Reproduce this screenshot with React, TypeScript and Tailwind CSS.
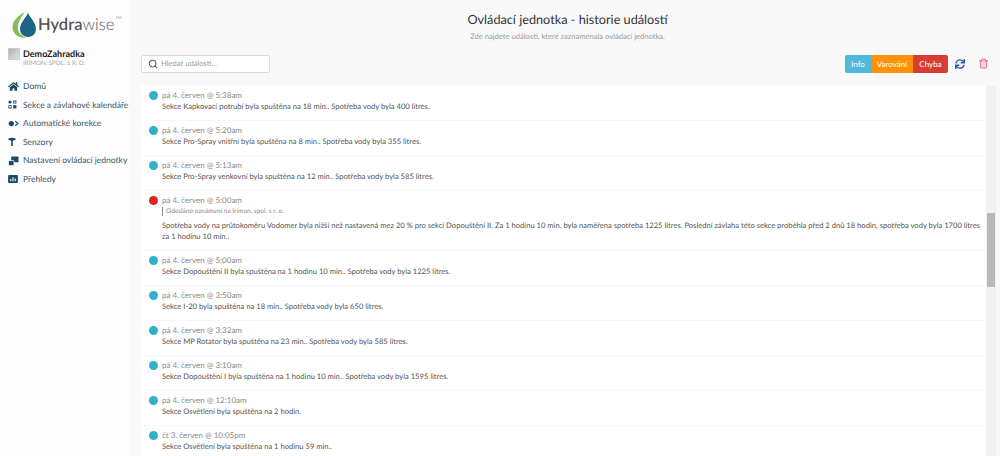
import { Search, Trash2 } from 'lucide-react'
import { FaHome, FaSync } from 'react-icons/fa'

interface EventRow {
  time: string
  text: string
  color?: 'blue' | 'red'
  note?: string
}

const events: EventRow[] = [
  { time: 'pá 4. červen @ 5:38am', text: 'Sekce Kapkovací potrubí byla spuštěna na 18 min.. Spotřeba vody byla 400 litres.' },
  { time: 'pá 4. červen @ 5:20am', text: 'Sekce Pro-Spray vnitřní byla spuštěna na 8 min.. Spotřeba vody byla 355 litres.' },
  { time: 'pá 4. červen @ 5:13am', text: 'Sekce Pro-Spray venkovní byla spuštěna na 12 min.. Spotřeba vody byla 585 litres.' },
  {
    time: 'pá 4. červen @ 5:00am',
    color: 'red',
    note: 'Odesláno oznámení na Irimon, spol. s r. o.',
    text: 'Spotřeba vody na průtokoměru Vodomer byla nižší než nastavená mez 20 % pro sekci Dopouštění II. Za 1 hodinu 10 min. byla naměřena spotřeba 1225 litres. Poslední závlaha této sekce proběhla před 2 dnů 18 hodin, spotřeba vody byla 1700 litres za 1 hodinu 10 min..',
  },
  { time: 'pá 4. červen @ 5:00am', text: 'Sekce Dopouštění II byla spuštěna na 1 hodinu 10 min.. Spotřeba vody byla 1225 litres.' },
  { time: 'pá 4. červen @ 3:50am', text: 'Sekce I-20 byla spuštěna na 18 min.. Spotřeba vody byla 650 litres.' },
  { time: 'pá 4. červen @ 3:32am', text: 'Sekce MP Rotator byla spuštěna na 23 min.. Spotřeba vody byla 585 litres.' },
  { time: 'pá 4. červen @ 3:10am', text: 'Sekce Dopouštění I byla spuštěna na 1 hodinu 10 min.. Spotřeba vody byla 1595 litres.' },
  { time: 'pá 4. červen @ 12:10am', text: 'Sekce Osvětlení byla spuštěna na 2 hodin.' },
  { time: 'čt 3. červen @ 10:05pm', text: 'Sekce Osvětlení byla spuštěna na 1 hodinu 59 min..' },
]

function ZonesIcon() {
  return (
    <svg width="9" height="9" viewBox="0 0 9 9" fill="#1d4a63">
      <circle cx="2" cy="2" r="1.6" />
      <path d="M5.2 0.6 H8.4 V3.6 H5.2 Z M6 1.4 V2.8 H7.6 V1.4 Z" fillRule="evenodd" />
      <path d="M0.4 5.2 H3.6 V8.4 H0.4 Z M1.2 6 V7.6 H2.8 V6 Z" fillRule="evenodd" />
      <path d="M5.2 5.2 H8.4 V8.4 H5.2 Z" />
    </svg>
  )
}

function AutoIcon() {
  return (
    <svg width="11" height="7" viewBox="0 0 12 8" fill="#1d4a63">
      <circle cx="3.5" cy="4" r="3" />
      <path d="M8 1.5 L11 4 L8 6.5" fill="none" stroke="#1d4a63" strokeWidth="1.4" />
    </svg>
  )
}

function SensorIcon() {
  return (
    <svg width="8" height="10" viewBox="0 0 10 11" fill="#1d4a63">
      <path d="M0.5 1 C3 -0.2 7 -0.2 9.5 1 V2.5 C8 3.5 7 4 6 4 V10.5 H4 V4 C3 4 2 3.5 0.5 2.5 Z" />
    </svg>
  )
}

function ControllerIcon() {
  return (
    <svg width="11" height="10" viewBox="0 0 12 11" fill="#1d4a63">
      <rect x="3.5" y="0.5" width="8" height="6.5" rx="1" />
      <rect x="0.5" y="5" width="6" height="5.5" rx="0.5" stroke="#fdfdfd" strokeWidth="0.8" />
    </svg>
  )
}

function ReportIcon() {
  return (
    <svg width="10" height="8" viewBox="0 0 11 9">
      <rect width="11" height="9" rx="1" fill="#1d4a63" />
      <path d="M3 7V4.5M5.5 7V2.5M8 7V4" stroke="#fff" strokeWidth="1.2" />
    </svg>
  )
}

const menu = [
  { label: 'Domů', icon: <FaHome size={11} color="#1d4a63" /> },
  { label: 'Sekce a závlahové kalendáře', icon: <ZonesIcon /> },
  { label: 'Automatické korekce', icon: <AutoIcon /> },
  { label: 'Senzory', icon: <SensorIcon /> },
  { label: 'Nastavení ovládací jednotky', icon: <ControllerIcon /> },
  { label: 'Přehledy', icon: <ReportIcon /> },
]

function Logo() {
  return (
    <div className="flex items-center pl-3 pt-[7px] h-[41px]">
      <svg width="24" height="27" viewBox="0 0 24 27" className="shrink-0">
        <path d="M13 1 C5 5 0 11 0.5 17 C1 23 6 27 14 27 C8 24 5 20 6 15 C6.5 10 10 5 13 1 Z" fill="#86bc5a" />
        <path d="M16 2 C13 8 8 12 8 18 C8 23 12 26 16 26 C20 26 24 23 24 18 C24 12 19 8 16 2 Z" fill="#1c6684" />
      </svg>
      <span className="ml-[2px] text-[16.5px] leading-none text-[#555]">
        <span className="font-semibold">Hydra</span>
        <span className="font-light">wise</span>
      </span>
      <span className="self-start mt-[8px] ml-[1px] text-[4px] text-[#888]">TM</span>
    </div>
  )
}

function Sidebar() {
  return (
    <aside className="w-[129px] shrink-0 bg-[#fdfdfd] h-full">
      <Logo />
      <div className="flex items-start pl-2 mt-[6px] h-[22px]">
        <div className="w-[12px] h-[12px] mt-[1px] shrink-0 bg-gradient-to-br from-[#a9b4b4] to-[#dfe6e4] border border-[#ccc]" />
        <div className="ml-[3px]">
          <div className="text-[9px] leading-[13px] font-bold text-[#222]">DemoZahradka</div>
          <div className="text-[6.2px] leading-[8px] text-[#aaa]">IRIMON, SPOL. S R. O.</div>
        </div>
      </div>
      <nav className="mt-[8px]">
        {menu.map(item => (
          <div key={item.label} className="flex items-center h-[18.6px] pl-2">
            <span className="w-[15px] shrink-0 flex items-center justify-start">{item.icon}</span>
            <span className="text-[8.5px] text-[#3a5566] whitespace-nowrap">{item.label}</span>
          </div>
        ))}
      </nav>
    </aside>
  )
}

function Toolbar() {
  return (
    <div className="flex items-center justify-between pl-[12px] pr-[11px] h-[27px] mt-[9px]">
      <div className="flex items-center w-[129px] h-[18px] bg-white border border-[#ddd] rounded-[2px] pl-[6px]">
        <Search size={10} strokeWidth={2.5} color="#555" />
        <span className="ml-[3px] text-[7.6px] text-[#999]">Hledat události...</span>
      </div>
      <div className="flex items-center">
        <div className="flex h-[18px] text-[8px] text-white rounded-[2px] overflow-hidden">
          <span className="w-[26px] flex items-center justify-center bg-[#4fb8db]">Info</span>
          <span className="w-[42px] flex items-center justify-center bg-[#fb9209]">Varování</span>
          <span className="w-[35px] flex items-center justify-center bg-[#d73c36]">Chyba</span>
        </div>
        <FaSync size={10} color="#2a5aa0" className="ml-[7px]" />
        <Trash2 size={11} strokeWidth={2} color="#e06a78" fill="#f8d0d4" className="ml-[13px]" />
      </div>
    </div>
  )
}

function EventItem({ event }: { event: EventRow }) {
  return (
    <div className="flex pl-[8px] pt-[4px] pb-[7.4px] border-b border-[#f7f7f7]">
      <span className={`w-[9px] h-[9px] rounded-full mt-[1px] shrink-0 ${event.color === 'red' ? 'bg-[#dc2626]' : 'bg-[#33aecb]'}`} />
      <div className="ml-[4px] min-w-0 pr-1">
        <div className="text-[8px] leading-[11px] text-[#8b8b8b]">{event.time}</div>
        {event.note && (
          <div className="mt-[1.5px] mb-[3.4px] border-l border-[#888] pl-[3px] text-[6.5px] leading-[9px] text-[#888]">{event.note}</div>
        )}
        <div className="text-[7.6px] leading-[11.6px] text-[#555]">{event.text}</div>
      </div>
    </div>
  )
}

export default function App() {
  return (
    <div className="flex w-[1000px] h-[456px] overflow-hidden bg-[#f9f9f9] font-['Lato',sans-serif] [text-rendering:geometricPrecision]">
      <Sidebar />
      <main className="flex-1 min-w-0 flex flex-col">
        <h1 className="mt-[9px] pl-[6px] text-center text-[12.7px] leading-[20px] text-[#333]">Ovládací jednotka - historie událostí</h1>
        <p className="mt-[2px] pl-[6px] text-center text-[7.6px] leading-[10px] text-[#999]">Zde najdete události, které zaznamenala ovládací jednotka.</p>
        <Toolbar />
        <div className="flex mt-[9px] flex-1 min-h-0 pl-[12px] pr-[4px]">
          <div className="flex-1 min-w-0 bg-white overflow-hidden">
            {events.map((e, i) => (
              <EventItem key={i} event={e} />
            ))}
          </div>
          <div className="w-[10px] bg-[#f1f1f1] relative">
            <div className="absolute top-[127px] h-[74px] left-[1px] right-[1px] bg-[#b9b9b9]" />
          </div>
        </div>
      </main>
    </div>
  )
}
